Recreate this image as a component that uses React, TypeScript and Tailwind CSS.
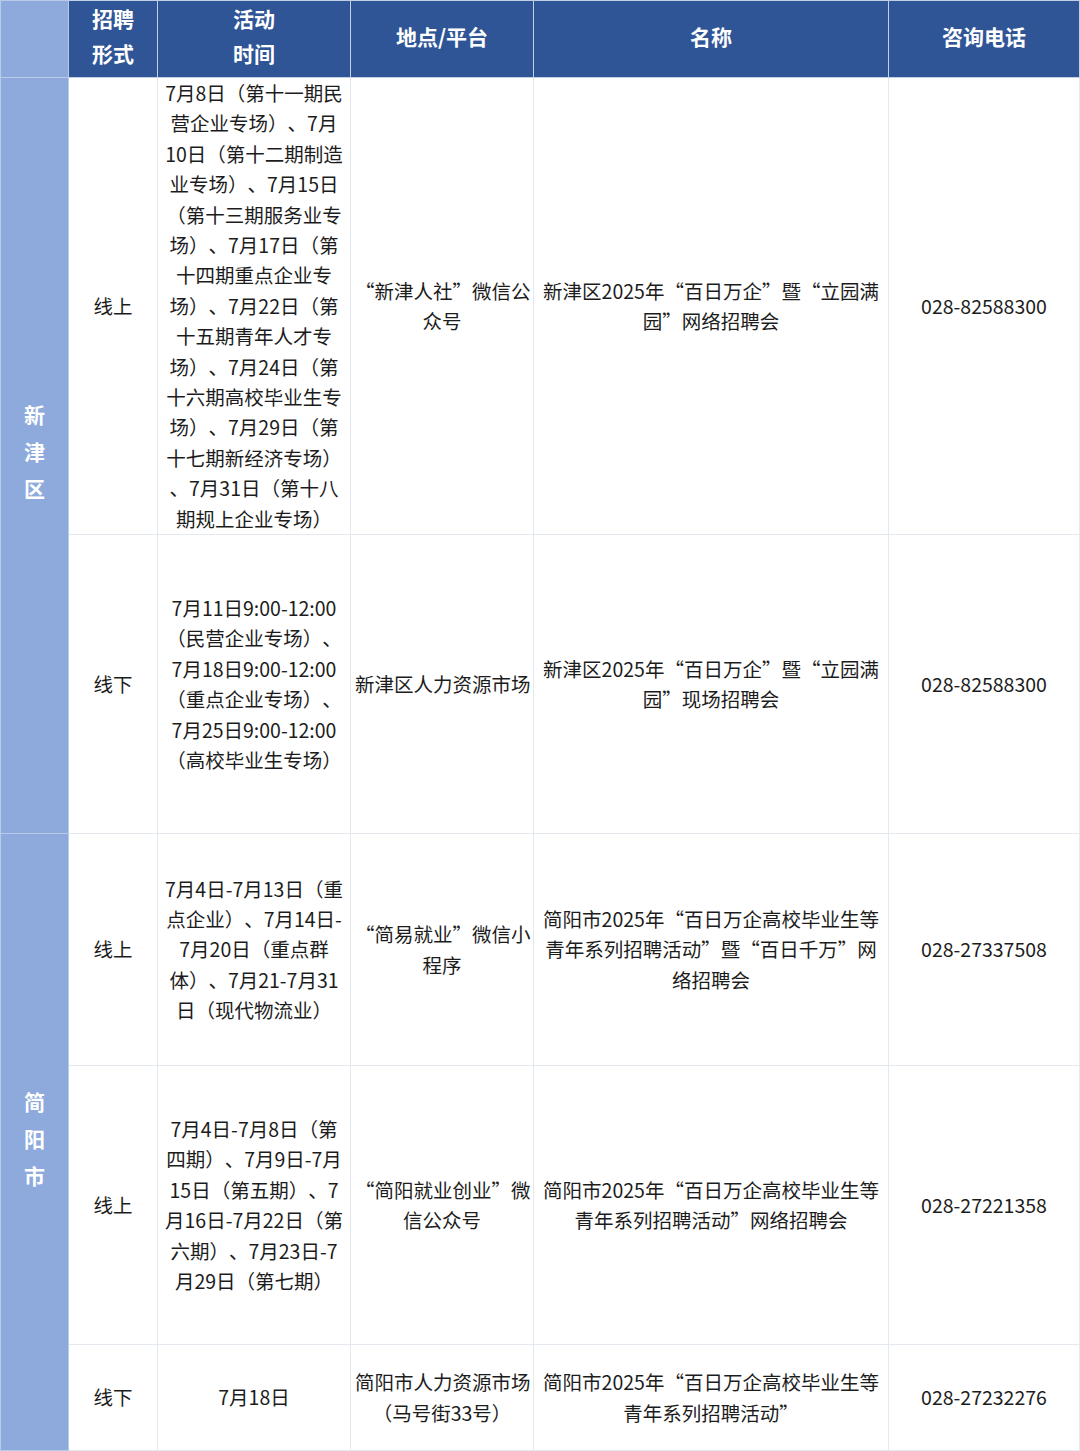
import React from "react";

type Row = {
  mode: string;
  time: string[];
  place: string[];
  name: string[];
  phone: string;
  height: string;
};

const xinjin: Row[] = [
  {
    mode: "线上",
    time: [
      "7月8日（第十一期民",
      "营企业专场）、7月",
      "10日（第十二期制造",
      "业专场）、7月15日",
      "（第十三期服务业专",
      "场）、7月17日（第",
      "十四期重点企业专",
      "场）、7月22日（第",
      "十五期青年人才专",
      "场）、7月24日（第",
      "十六期高校毕业生专",
      "场）、7月29日（第",
      "十七期新经济专场）",
      "、7月31日（第十八",
      "期规上企业专场）",
    ],
    place: ["“新津人社”微信公", "众号"],
    name: ["新津区2025年“百日万企”暨“立园满", "园”网络招聘会"],
    phone: "028-82588300",
    height: "h-[455px]",
  },
  {
    mode: "线下",
    time: [
      "7月11日9:00-12:00",
      "（民营企业专场）、",
      "7月18日9:00-12:00",
      "（重点企业专场）、",
      "7月25日9:00-12:00",
      "（高校毕业生专场）",
    ],
    place: ["新津区人力资源市场"],
    name: ["新津区2025年“百日万企”暨“立园满", "园”现场招聘会"],
    phone: "028-82588300",
    height: "h-[299px]",
  },
];

const jianyang: Row[] = [
  {
    mode: "线上",
    time: [
      "7月4日-7月13日（重",
      "点企业）、7月14日-",
      "7月20日（重点群",
      "体）、7月21-7月31",
      "日（现代物流业）",
    ],
    place: ["“简易就业”微信小", "程序"],
    name: [
      "简阳市2025年“百日万企高校毕业生等",
      "青年系列招聘活动”暨“百日千万”网",
      "络招聘会",
    ],
    phone: "028-27337508",
    height: "h-[232px]",
  },
  {
    mode: "线上",
    time: [
      "7月4日-7月8日（第",
      "四期）、7月9日-7月",
      "15日（第五期）、7",
      "月16日-7月22日（第",
      "六期）、7月23日-7",
      "月29日（第七期）",
    ],
    place: ["“简阳就业创业”微", "信公众号"],
    name: ["简阳市2025年“百日万企高校毕业生等", "青年系列招聘活动”网络招聘会"],
    phone: "028-27221358",
    height: "h-[279px]",
  },
  {
    mode: "线下",
    time: ["7月18日"],
    place: ["简阳市人力资源市场", "（马号街33号）"],
    name: ["简阳市2025年“百日万企高校毕业生等", "青年系列招聘活动”"],
    phone: "028-27232276",
    height: "h-[106px]",
  },
];

function Lines({ lines }: { lines: string[] }) {
  return (
    <>
      {lines.map((l, i) => (
        <div key={i} className="whitespace-nowrap">
          {l}
        </div>
      ))}
    </>
  );
}

const td = "border border-[#e4e8ef] text-center align-middle px-1";
const th = "border border-[#c3cfe6] bg-[#2f5597] pb-[6px]";

function Region({ name, span }: { name: string; span: number }) {
  return (
    <td
      rowSpan={span}
      className="border border-[#b9c9e8] bg-[#8eaadc] text-center align-middle text-white font-bold text-[21px] leading-[37px] pb-[8px]"
    >
      {name.split("").map((c, i) => (
        <div key={i}>{c}</div>
      ))}
    </td>
  );
}

function BodyRows({ region, rows }: { region: string; rows: Row[] }) {
  return (
    <>
      {rows.map((r, i) => (
        <tr key={i} className={r.height}>
          {i === 0 && <Region name={region} span={rows.length} />}
          <td className={td}>{r.mode}</td>
          <td className={td}>
            <Lines lines={r.time} />
          </td>
          <td className={td}>
            <Lines lines={r.place} />
          </td>
          <td className={td}>
            <Lines lines={r.name} />
          </td>
          <td className={td}>{r.phone}</td>
        </tr>
      ))}
    </>
  );
}

export default function App() {
  return (
    <div
      className="w-[1080px] bg-white text-[#1c1c1c] text-[19.5px] leading-[30.4px] [text-spacing-trim:space-all]"
      style={{ fontFamily: '"Noto Sans CJK SC", "Noto Sans", sans-serif' }}
    >
      <table className="w-[1079px] table-fixed border-collapse">
        <colgroup>
          <col className="w-[68px]" />
          <col className="w-[89px]" />
          <col className="w-[193px]" />
          <col className="w-[183px]" />
          <col className="w-[355px]" />
          <col className="w-[191px]" />
        </colgroup>
        <thead>
          <tr className="h-[77px] text-white font-bold text-[21px] leading-[35px]">
            <th className="border border-[#b9c9e8] bg-[#8eaadc]"></th>
            <th className={th}>
              招聘
              <br />
              形式
            </th>
            <th className={th}>
              活动
              <br />
              时间
            </th>
            <th className={th}>地点/平台</th>
            <th className={th}>名称</th>
            <th className={th}>咨询电话</th>
          </tr>
        </thead>
        <tbody>
          <BodyRows region="新津区" rows={xinjin} />
          <BodyRows region="简阳市" rows={jianyang} />
        </tbody>
      </table>
    </div>
  );
}
